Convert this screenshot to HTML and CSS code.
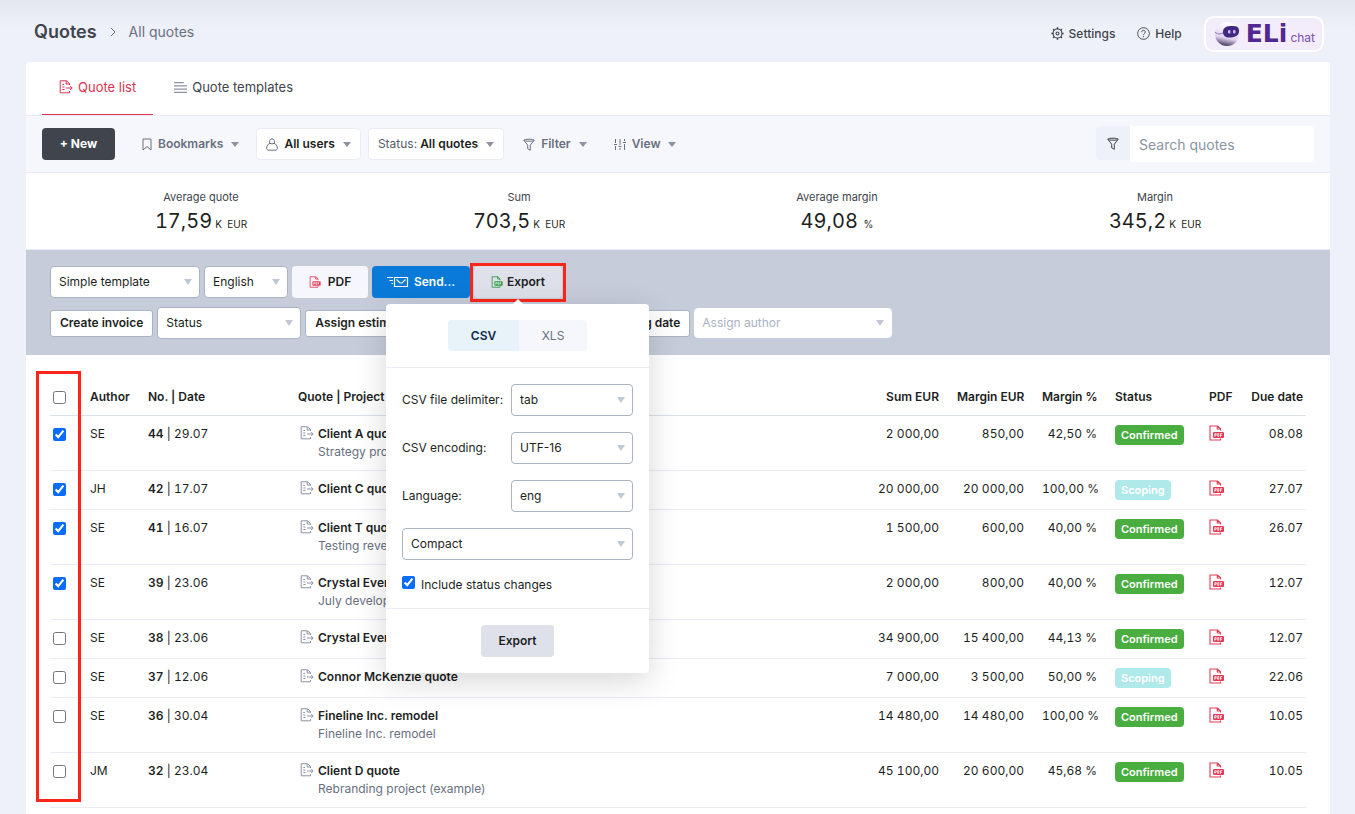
FILE: index.html
```html
<!DOCTYPE html>
<html lang="en">
<head>
<meta charset="utf-8">
<title>Quotes</title>
<link rel="stylesheet" href="styles.css">
</head>
<body>
<svg class="sprite" aria-hidden="true">
  <symbol id="doc" viewBox="0 0 14 14"><path d="M10.500 5V3.500L7.500.800H1.200V12.800H10.500V11M7.200 1V4H10.300M3.300 4.500H5M3.300 7H5.500M3.300 9.500H5.500M7 8H13M11.200 6L13.200 8L11.200 10" fill="none" stroke="currentColor"/></symbol>
  <symbol id="pdf" viewBox="0 0 15 16"><path d="M11.500 5.500V3.700L8.500 1H1V15H11.500V13.500M8.300 1V4H11.500" fill="none" stroke="currentColor" stroke-width="1.100"/><rect x="4" y="7" width="11" height="6" rx="1" fill="currentColor"/><path d="M5.800 11.700V8.600H7.200V10.300H5.800M8.700 8.600H9.800V11.300H8.700ZM11.500 11.700V8.600H13.200M11.500 10.200H12.900" fill="none" stroke="#fff" stroke-width=".8"/></symbol>
  <symbol id="funnel" viewBox="0 0 12 13"><path d="M.8 2.200C.8.900 11.200.900 11.200 2.200S.8 3.500.8 2.200L4.700 7.200V10.800L7.300 12.300V7.200L11.200 2.200" fill="none" stroke="currentColor"/></symbol>
</svg>

<header class="top">
  <nav class="crumbs">
    <h1 class="title">Quotes</h1>
    <svg class="crumb-arrow" viewBox="0 0 6 10"><path d="M1 1L5 5L1 9" fill="none" stroke="currentColor"/></svg>
    <a class="crumb" href="#">All quotes</a>
  </nav>
  <div class="top-links">
    <a class="top-link" href="#"><svg class="ic13" viewBox="0 0 14 14"><g fill="none" stroke="currentColor" stroke-width="1.200"><circle cx="7" cy="7" r="4.800"/><circle cx="7" cy="7" r="1.600"/><path stroke-width="1.700" d="M7 .4V2.200M7 11.800V13.600M.4 7H2.200M11.800 7H13.600M2.300 2.300L3.600 3.600M10.400 10.400L11.700 11.700M2.300 11.700L3.600 10.400M10.400 3.600L11.700 2.300"/></g></svg>Settings</a>
    <a class="top-link" href="#"><svg class="ic13" viewBox="0 0 14 14"><g fill="none" stroke="currentColor"><circle cx="7" cy="7" r="6.300"/><path d="M5 5.600C5 2.900 9 2.900 9 5.400C9 7 7 6.900 7 8.700M7 9.800V11"/></g></svg>Help</a>
    <a class="eli" href="#">
      <svg class="bot" viewBox="0 0 26 26"><defs><linearGradient id="ball" x1=".5" y1="0" x2=".3" y2="1"><stop offset="0" stop-color="#fff"/><stop offset=".65" stop-color="#e0d3f2"/><stop offset="1" stop-color="#3c2a55"/></linearGradient></defs><circle cx="13" cy="13" r="12" fill="url(#ball)"/><path d="M1 11C4 14 8 13 10 11" fill="none" stroke="#8b78ab"/><path d="M9 11C9 6 13 5 18 5S25 6 25 10S22 16 17 16.500S9 15 9 11Z" fill="#40277f"/><rect x="14" y="9" width="2.500" height="3.500" rx="1" fill="#cdb5f5"/><rect x="19" y="9" width="2.500" height="3.500" rx="1" fill="#cdb5f5"/></svg>
      <span class="eli-name">ELi</span><span class="eli-chat">chat</span>
    </a>
  </div>
</header>

<main class="panel">
  <nav class="tabs">
    <a class="tab tab-on" href="#"><svg class="ic14"><use href="#doc"/></svg>Quote list</a>
    <a class="tab" href="#"><svg class="ic-lines" viewBox="0 0 12 12"><path d="M0 1.500H9M0 4.500H12M0 7.500H12M0 10.500H12" stroke="currentColor"/></svg>Quote templates</a>
  </nav>

  <div class="toolbar">
    <button class="new">+ New</button>
    <button class="menu bookmarks"><svg class="ic-mark" viewBox="0 0 10 13"><path d="M1 1H9V12L5 8.500L1 12Z" fill="none" stroke="currentColor"/></svg>Bookmarks<i class="caret"></i></button>
    <button class="menu boxed"><svg class="ic-user" viewBox="0 0 12 13"><path d="M6 .8A2.500 2.800 0 0 1 8 5.300C10 5.800 11.300 8 11.300 10.200C11.300 11.500 10.500 12.200 9 12.200H3C1.500 12.200.7 11.500.7 10.200C.7 8 2 5.800 4 5.300A2.500 2.800 0 0 1 6 .8ZM4 5.300Q6 6.500 8 5.300" fill="none" stroke="#69707f"/></svg>All users<i class="caret"></i></button>
    <button class="menu boxed"><span><span class="soft">Status:</span> All quotes</span><i class="caret"></i></button>
    <button class="menu plain"><svg class="ic-funnel"><use href="#funnel"/></svg>Filter<i class="caret"></i></button>
    <button class="menu plain"><svg class="ic-funnel" viewBox="0 0 12 13"><path d="M1.500 1V5M1.500 8V12M6 1V7M6 10V12M10.500 1V3M10.500 6V12M0 6.500H3M4.500 8.500H7.500M9 4.500H12" stroke="currentColor"/></svg>View<i class="caret"></i></button>
    <div class="search">
      <button class="search-btn" aria-label="Search filter"><svg class="ic-funnel"><use href="#funnel"/></svg></button>
      <input class="search-input" type="search" placeholder="Search quotes" aria-label="Search quotes">
    </div>
  </div>

  <section class="stats">
    <div class="stat"><span class="stat-label">Average quote</span><span class="stat-value">17,59<small class="unit">K&nbsp; EUR</small></span></div>
    <div class="stat"><span class="stat-label">Sum</span><span class="stat-value">703,5<small class="unit">K&nbsp; EUR</small></span></div>
    <div class="stat"><span class="stat-label">Average margin</span><span class="stat-value">49,08<small class="unit">&nbsp;%</small></span></div>
    <div class="stat"><span class="stat-label">Margin</span><span class="stat-value">345,2<small class="unit">K&nbsp; EUR</small></span></div>
  </section>

  <section class="bulk">
    <div class="bulk-row">
      <span class="pick w-template"><select class="select" aria-label="Template"><option>Simple template</option></select></span>
      <span class="pick w-lang"><select class="select" aria-label="Template language"><option>English</option></select></span>
      <button class="act act-pdf"><svg class="ic-file"><use href="#pdf"/></svg>PDF</button>
      <button class="act act-send"><svg class="ic-send" viewBox="0 0 22 12"><path d="M7.500 1.500H20.500V10.500H7.500ZM9.500 3.500L13 7H15L18.500 3.500M0 1.500H6M2.500 4.500H6M4.500 7.500H6" fill="none" stroke="currentColor" stroke-width="1.200"/></svg>Send...</button>
      <div class="export">
        <button class="act act-export"><svg class="ic-file green"><use href="#pdf"/></svg>Export</button>
        <div class="mark mark-export"></div>
        <form class="pop">
          <div class="pop-tabs"><div class="seg"><button type="button" class="seg-btn seg-on">CSV</button><button type="button" class="seg-btn">XLS</button></div></div>
          <div class="pop-fields">
            <div class="field"><label for="delim">CSV file delimiter:</label><span class="pick w-field"><select class="select" id="delim"><option>tab</option></select></span></div>
            <div class="field"><label for="enc">CSV encoding:</label><span class="pick w-field"><select class="select" id="enc"><option>UTF-16</option></select></span></div>
            <div class="field"><label for="lang">Language:</label><span class="pick w-field"><select class="select" id="lang"><option>eng</option></select></span></div>
            <span class="pick"><select class="select" aria-label="Layout"><option>Compact</option></select></span>
            <label class="include"><input class="check" type="checkbox" checked>Include status changes</label>
          </div>
          <div class="pop-foot"><button type="button" class="go">Export</button></div>
        </form>
      </div>
    </div>
    <div class="bulk-row">
      <button class="small">Create invoice</button>
      <span class="pick w-status"><select class="select" aria-label="Status"><option>Status</option></select></span>
      <div class="assign"><button class="small">Assign estimated date</button><button class="small">Assign closing date</button></div>
      <span class="pick w-author"><select class="select select-soft" aria-label="Assign author"><option>Assign author</option></select></span>
    </div>
  </section>

  <section class="list">
    <div class="mark mark-checks"></div>
    <table class="table">
      <colgroup><col class="c-check"><col class="c-author"><col class="c-no"><col><col class="c-sum"><col class="c-meur"><col class="c-mpct"><col class="c-status"><col class="c-pdf"><col class="c-due"></colgroup>
      <thead><tr><th class="box"><input class="check" type="checkbox" aria-label="Select all"></th><th>Author</th><th>No. | Date</th><th>Quote | Project</th><th class="num">Sum EUR</th><th class="num">Margin EUR</th><th class="num">Margin %</th><th>Status</th><th>PDF</th><th class="num due">Due date</th></tr></thead>
      <tbody>
        <tr><td class="box"><input class="check" type="checkbox" aria-label="Quote 44" checked></td><td>SE</td><td class="no"><b>44</b> | 29.07</td><td><div class="quote"><svg class="ic14"><use href="#doc"/></svg><div><b>Client A quote</b><div class="project">Strategy project</div></div></div></td><td class="num">2 000,00</td><td class="num">850,00</td><td class="num">42,50 %</td><td><span class="badge">Confirmed</span></td><td><svg class="ic-pdf"><use href="#pdf"/></svg></td><td class="num due">08.08</td></tr>
        <tr><td class="box"><input class="check" type="checkbox" aria-label="Quote 42" checked></td><td>JH</td><td class="no"><b>42</b> | 17.07</td><td><div class="quote"><svg class="ic14"><use href="#doc"/></svg><div><b>Client C quote</b></div></div></td><td class="num">20 000,00</td><td class="num">20 000,00</td><td class="num">100,00 %</td><td><span class="badge scoping">Scoping</span></td><td><svg class="ic-pdf"><use href="#pdf"/></svg></td><td class="num due">27.07</td></tr>
        <tr><td class="box"><input class="check" type="checkbox" aria-label="Quote 41" checked></td><td>SE</td><td class="no"><b>41</b> | 16.07</td><td><div class="quote"><svg class="ic14"><use href="#doc"/></svg><div><b>Client T quote</b><div class="project">Testing revenue</div></div></div></td><td class="num">1 500,00</td><td class="num">600,00</td><td class="num">40,00 %</td><td><span class="badge">Confirmed</span></td><td><svg class="ic-pdf"><use href="#pdf"/></svg></td><td class="num due">26.07</td></tr>
        <tr><td class="box"><input class="check" type="checkbox" aria-label="Quote 39" checked></td><td>SE</td><td class="no"><b>39</b> | 23.06</td><td><div class="quote"><svg class="ic14"><use href="#doc"/></svg><div><b>Crystal Events</b><div class="project">July development</div></div></div></td><td class="num">2 000,00</td><td class="num">800,00</td><td class="num">40,00 %</td><td><span class="badge">Confirmed</span></td><td><svg class="ic-pdf"><use href="#pdf"/></svg></td><td class="num due">12.07</td></tr>
        <tr><td class="box"><input class="check" type="checkbox" aria-label="Quote 38"></td><td>SE</td><td class="no"><b>38</b> | 23.06</td><td><div class="quote"><svg class="ic14"><use href="#doc"/></svg><div><b>Crystal Events</b></div></div></td><td class="num">34 900,00</td><td class="num">15 400,00</td><td class="num">44,13 %</td><td><span class="badge">Confirmed</span></td><td><svg class="ic-pdf"><use href="#pdf"/></svg></td><td class="num due">12.07</td></tr>
        <tr><td class="box"><input class="check" type="checkbox" aria-label="Quote 37"></td><td>SE</td><td class="no"><b>37</b> | 12.06</td><td><div class="quote"><svg class="ic14"><use href="#doc"/></svg><div><b>Connor McKenzie quote</b></div></div></td><td class="num">7 000,00</td><td class="num">3 500,00</td><td class="num">50,00 %</td><td><span class="badge scoping">Scoping</span></td><td><svg class="ic-pdf"><use href="#pdf"/></svg></td><td class="num due">22.06</td></tr>
        <tr><td class="box"><input class="check" type="checkbox" aria-label="Quote 36"></td><td>SE</td><td class="no"><b>36</b> | 30.04</td><td><div class="quote"><svg class="ic14"><use href="#doc"/></svg><div><b>Fineline Inc. remodel</b><div class="project">Fineline Inc. remodel</div></div></div></td><td class="num">14 480,00</td><td class="num">14 480,00</td><td class="num">100,00 %</td><td><span class="badge">Confirmed</span></td><td><svg class="ic-pdf"><use href="#pdf"/></svg></td><td class="num due">10.05</td></tr>
        <tr><td class="box"><input class="check" type="checkbox" aria-label="Quote 32"></td><td>JM</td><td class="no"><b>32</b> | 23.04</td><td><div class="quote"><svg class="ic14"><use href="#doc"/></svg><div><b>Client D quote</b><div class="project">Rebranding project (example)</div></div></div></td><td class="num">45 100,00</td><td class="num">20 600,00</td><td class="num">45,68 %</td><td><span class="badge">Confirmed</span></td><td><svg class="ic-pdf"><use href="#pdf"/></svg></td><td class="num due">10.05</td></tr>
      </tbody>
    </table>
  </section>
</main>
</body>
</html>
```

FILE: styles.css
```css
* { box-sizing: border-box; }
body {
  margin: 0;
  min-height: 100vh;
  display: flex;
  flex-direction: column;
  background: linear-gradient(#e3e6ef, #eef0fa 28px);
  font: 12px/18px Inter, "Liberation Sans", sans-serif;
  color: #1d1f23;
}
button, input, select { font: inherit; color: inherit; margin: 0; }
button { border: 0; padding: 0; cursor: pointer; white-space: nowrap; }
a { text-decoration: none; color: inherit; }
svg { flex: none; display: block; }
b { font-weight: 600; }
.sprite { position: absolute; width: 0; height: 0; }
.ic13 { width: 13px; height: 13px; }
.ic14 { width: 14px; height: 14px; }

.top { height: 62px; padding: 5px 31px 0 34px; display: flex; align-items: center; justify-content: space-between; }
.crumbs { display: flex; align-items: center; gap: 13px; padding-bottom: 3px; color: #69707f; }
.title { margin: 0; font-size: 18px; font-weight: 600; color: #40444d; }
.crumb-arrow { width: 6px; height: 10px; }
.crumb { font-size: 14px; }
.top-links { display: flex; align-items: center; gap: 22px; color: #40444d; }
.top-link { display: flex; align-items: center; gap: 5px; font-weight: 500; }
.eli { display: flex; align-items: center; height: 36px; padding: 0 7px 0 8px; border: 2px solid #fff; border-radius: 10px; background: #f3ecfa; color: #51288f; }
.bot { width: 26px; height: 26px; margin-right: 6px; }
.eli-name { font: bold 25px/30px "DejaVu Sans", sans-serif; }
.eli-chat { padding-top: 9px; margin-left: 3px; font-size: 12px; color: #7a4fb5; }

.panel { flex: 1; margin: 0 25px 0 26px; background: #fff; border-radius: 4px 4px 0 0; }
.tabs { display: flex; gap: 4px; padding: 0 16px; border-bottom: 1px solid #e9ecf5; }
.tab { height: 53px; padding: 0 17px 2px; display: flex; align-items: center; gap: 5px; font-size: 13px; color: #40444d; border-bottom: 1px solid transparent; }
.tab-on { color: #dd3351; border-color: #dd3351; }
.ic-lines { width: 13px; height: 13px; color: #8b93a3; }

.toolbar { height: 57px; padding: 0 16px; display: flex; align-items: center; background: #f6f7fc; border-bottom: 1px solid #e9ecf5; font-weight: 600; }
.new { width: 73px; height: 32px; border-radius: 4px; background: #40444d; color: #fff; font-weight: 700; }
.menu { height: 32px; display: flex; align-items: center; gap: 6px; background: none; color: #69707f; font-weight: 600; }
.bookmarks { margin: 0 17px 0 27px; }
.boxed { margin-right: 7px; padding: 0 9px; background: #fff; border: 1px solid #e9ecf5; border-radius: 4px; color: #1d1f23; }
.plain { margin: 0 15px 0 12px; }
.soft { font-weight: 400; color: #565c68; }
.caret { margin-left: 2px; border: 4px solid transparent; border-top: 5px solid #8b93a3; border-bottom: 0; }
.ic-mark { width: 10px; height: 13px; }
.ic-user, .ic-funnel { width: 12px; height: 13px; }
.search { margin-left: auto; display: flex; align-items: flex-start; }
.search-btn { width: 34px; height: 34px; display: flex; align-items: center; justify-content: center; background: #eef0fa; border-radius: 4px 0 0 4px; color: #40444d; }
.search-input { width: 184px; height: 36px; padding: 0 9px; border: 0; border-radius: 0 4px 4px 0; background: #fff; font-size: 14px; font-weight: 400; }
.search-input::placeholder { color: #8b93a3; opacity: 1; }

.stats { display: grid; grid-template-columns: repeat(4, 1fr); padding: 15px 16px 10px; border-bottom: 1px solid #e9ecf5; text-align: center; }
.stat { display: flex; flex-direction: column; }
.stat-label { font-size: 11px; color: #40444d; }
.stat-value { font-size: 20px; line-height: 30px; font-variant-numeric: tabular-nums; }
.unit { margin-left: 3px; font-size: 10px; }

.bulk { padding: 16px 24px; display: flex; flex-direction: column; gap: 9px; background: #c6ccda; }
.bulk-row { display: flex; align-items: center; gap: 4px; }
.pick { position: relative; display: block; }
.pick::after { content: ""; position: absolute; right: 8px; top: 50%; margin-top: -3px; border: 4px solid transparent; border-top: 6px solid #c0c8d6; border-bottom: 0; pointer-events: none; }
.select { display: block; width: 100%; height: 32px; padding: 0 20px 0 8px; appearance: none; background: #fff; border: 1px solid #a9b3c4; border-radius: 4px; }
.select-soft { height: 30px; padding-left: 7px; border-color: #fff; color: #a9b3c4; }
.w-template { width: 150px; }
.w-lang { width: 84px; }
.w-status { width: 144px; }
.w-author { width: 198px; }
.w-field { width: 122px; }
.act { height: 32px; display: flex; align-items: center; justify-content: center; gap: 7px; border-radius: 4px; font-weight: 600; }
.act-pdf { width: 76px; background: #f6f7fc; }
.act-send { width: 98px; gap: 5px; background: #0a7ad9; color: #fff; }
.act-export { width: 88px; gap: 4px; background: #dee1ea; }
.ic-file { width: 12px; height: 12px; color: #e63b55; }
.green { color: #2c9440; }
.ic-send { width: 22px; height: 12px; }
.small { height: 27px; padding: 0 9px; background: #fff; border: 1px solid #a9b3c4; border-radius: 3px; font-weight: 600; text-align: left; }
.assign { width: 385px; display: flex; gap: 4px; }
.assign .small:first-child { flex: 1; }

.export { position: relative; }
.mark { position: absolute; border: 3px solid #fb2619; pointer-events: none; }
.mark-export { inset: -3px -4px -4px; z-index: 3; }
.pop { position: absolute; z-index: 4; top: 38px; left: -88px; width: 263px; background: #fff; border-radius: 4px; box-shadow: 0 8px 32px rgba(0, 0, 0, .16); }
.pop::before { content: ""; position: absolute; left: 126px; top: -5px; border: 6px solid transparent; border-top: 0; border-bottom: 6px solid #fff; }
.pop-tabs { padding: 16px; display: flex; justify-content: center; border-bottom: 1px solid #e9ecf5; }
.seg { display: flex; border-radius: 4px; overflow: hidden; }
.seg-btn { width: 68px; height: 31px; background: #f6f7fc; color: #69707f; }
.seg-on { width: 71px; background: #e8f2f9; color: #102a4c; font-weight: 600; }
.pop-fields { padding: 16px; display: flex; flex-direction: column; gap: 16px; }
.field { display: flex; align-items: center; justify-content: space-between; }
.include { display: flex; align-items: flex-start; gap: 6px; height: 16px; line-height: 18px; }
.pop-foot { padding: 16px; display: flex; justify-content: center; border-top: 1px solid #e9ecf5; }
.go { width: 73px; height: 32px; border-radius: 4px; background: #dee1ea; font-weight: 600; }
.check { width: 13px; height: 13px; flex: none; display: block; accent-color: #0a6cff; }

.list { position: relative; padding: 24px 24px 0; }
.mark-checks { left: 10px; top: 16px; bottom: 6px; width: 45px; }
.table { width: 100%; table-layout: fixed; border-collapse: separate; border-spacing: 0; }
.c-check { width: 31px; }
.c-author { width: 58px; }
.c-no { width: 150px; }
.c-sum { width: 98px; }
.c-meur { width: 85px; }
.c-mpct { width: 73px; }
.c-status { width: 94px; }
.c-pdf { width: 42px; }
.c-due { width: 64px; }
th { height: 37px; padding: 0 9px; text-align: left; font-weight: 600; white-space: nowrap; border-bottom: 1px solid #dbe0ea; }
td { padding: 9px 9px 11px; vertical-align: top; white-space: nowrap; border-bottom: 1px solid #e9ecf5; }
td .check { margin-top: 3px; }
.table .box { padding-left: 3px; padding-right: 0; }
.table .num { text-align: right; }
.table .due { padding-left: 0; padding-right: 3px; }
td.num, .no { font-variant-numeric: tabular-nums; }
.quote { display: flex; gap: 4px; padding-left: 2px; }
.quote .ic14 { margin-top: 1px; color: #8b93a3; }
.project { color: #69707f; }
tr:has(.project) td { padding-bottom: 9px; }
.badge { display: block; width: max-content; height: 20px; margin: 0 0 -2px; padding: 0 6px; border-radius: 4px; background: #49ad40; color: #fff; font-size: 11px; line-height: 20px; font-weight: 600; }
.scoping { background: #b0e9e9; }
.ic-pdf { width: 15px; height: 16px; color: #e63b55; }
```
